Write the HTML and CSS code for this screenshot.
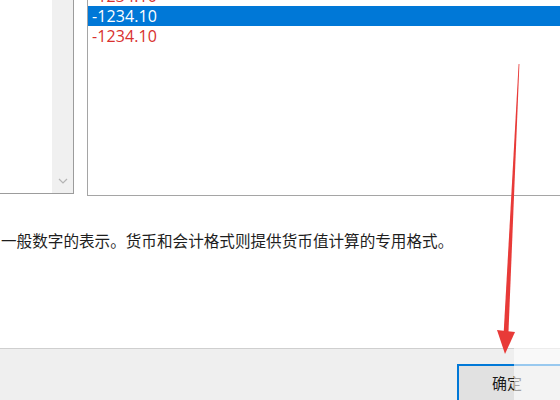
FILE: index.html
```html
<!DOCTYPE html>
<html>
<head>
<meta charset="utf-8">
<link rel="stylesheet" href="styles.css">
</head>
<body>
<div class="page">
  <div class="lists">
    <div class="list-left">
      <div class="list-left-body"></div>
      <div class="scrollbar">
        <svg class="chev" width="10" height="6" viewBox="0 0 10 6"><path d="M1 1 L5 5 L9 1" fill="none" stroke="#b4b4b4" stroke-width="1.2"/></svg>
      </div>
    </div>
    <div class="list-right">
      <div class="row red">-1234.10</div>
      <div class="row selected">-1234.10</div>
      <div class="row red">-1234.10</div>
    </div>
  </div>
  <p class="desc">一般数字的表示。货币和会计格式则提供货币值计算的专用格式。</p>
  <div class="footer">
    <button class="ok">确定</button>
  </div>
  <div class="watermark"></div>
  <svg class="arrow" width="560" height="400" viewBox="0 0 560 400">
    <polygon points="518.6,64 519.4,64 508.4,334 503.6,334" fill="#e83a38"/>
    <polygon points="497,330 515,332 505,354" fill="#e83a38"/>
  </svg>
</div>
</body>
</html>
```
FILE: styles.css
```css
html, body {
  margin: 0;
  padding: 0;
  background: #ffffff;
}
.page {
  width: 560px;
  height: 400px;
  overflow: hidden;
  position: relative;
  display: flex;
  flex-direction: column;
}
.lists {
  display: flex;
  align-items: flex-start;
  gap: 13px;
  margin-top: -30px;
  height: 226px;
  flex: none;
}
.list-left {
  width: 73px;
  height: 223px;
  border-right: 1px solid #9c9c9c;
  border-bottom: 1px solid #9c9c9c;
  display: flex;
  flex: none;
}
.list-left-body {
  flex: 1;
  background: #ffffff;
}
.scrollbar {
  width: 21px;
  background: #f0f0f0;
  display: flex;
  flex-direction: column;
  justify-content: flex-end;
  align-items: center;
  padding-bottom: 9px;
  box-sizing: border-box;
}
.list-right {
  flex: 1;
  border-left: 1px solid #a5a5a5;
  border-bottom: 1px solid #a5a5a5;
  padding-top: 16px;
  box-sizing: border-box;
  height: 226px;
}
.row {
  height: 20px;
  line-height: 20px;
  padding-left: 4px;
  font-family: "Open Sans", "Noto Sans", sans-serif;
  font-size: 16px;
  letter-spacing: 0.1px;
}
.red {
  color: #d8302e;
}
.selected {
  background: #0078d7;
  color: #ffffff;
}
.desc {
  margin: 34px 0 0 1px;
  font-family: "Noto Sans CJK SC", "Noto Sans", sans-serif;
  font-size: 15.6px;
  line-height: 20px;
  color: #1e1e1e;
  white-space: nowrap;
  flex: none;
}
.footer {
  margin-top: 98px;
  flex: 1;
  background: #efefef;
  border-top: 1px solid #cfcfcf;
  padding: 15px 0 0 457px;
}
.ok {
  width: 120px;
  height: 40px;
  border: 2px solid #0078d7;
  background: #e1e1e1;
  font-family: "Noto Sans CJK SC", sans-serif;
  font-size: 15px;
  color: #1a1a1a;
  text-align: left;
  padding: 0 0 4px 33px;
  margin: 0;
}
.watermark {
  position: absolute;
  left: 514px;
  top: 342px;
  width: 46px;
  height: 58px;
  background: rgba(255, 255, 255, 0.6);
}
.arrow {
  position: absolute;
  left: 0;
  top: 0;
  pointer-events: none;
}
```
